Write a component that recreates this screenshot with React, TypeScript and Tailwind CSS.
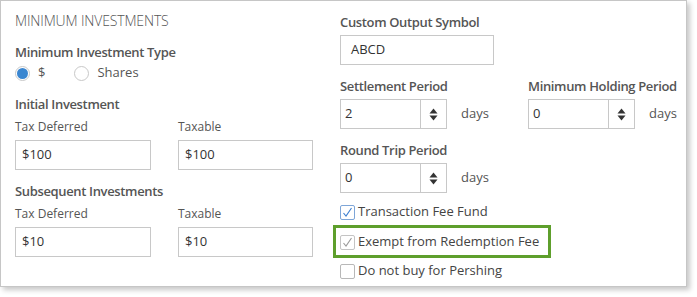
import React from 'react';

const font = { fontFamily: '"Open Sans", "Noto Sans", sans-serif' };

const TextBox = ({ value, className = '' }: { value: string; className?: string }) => (
  <div className={`h-[30px] border border-[#c8c8c8] bg-white flex items-center pl-[6px] text-[13px] text-[#333] ${className}`}>
    {value}
  </div>
);

const Spinner = ({ value }: { value: string }) => (
  <div className="flex items-center">
    <div className="h-[30px] w-[107px] border border-[#c8c8c8] bg-white flex">
      <div className="flex-1 flex items-center pl-[4px] text-[13px] text-[#333]">{value}</div>
      <div className="w-[26px] border-l border-[#c8c8c8] flex items-center justify-center">
        <svg width="9" height="13" viewBox="0 0 9 13">
          <path d="M4.5 0.5 L8.5 5.5 L0.5 5.5 Z" fill="#333" />
          <path d="M0.5 7.5 L8.5 7.5 L4.5 12.5 Z" fill="#333" />
        </svg>
      </div>
    </div>
    <span className="ml-[14px] text-[13px] text-[#555]">days</span>
  </div>
);

const Check = ({ checked, disabled }: { checked?: boolean; disabled?: boolean }) => (
  <span
    className={`w-[15px] h-[15px] rounded-[2px] border flex items-center justify-center bg-white ${
      disabled ? 'border-[#c4c4c4] bg-[#f1f1f1]' : checked ? 'border-[#7ea6d8]' : 'border-[#b8b8b8]'
    }`}
  >
    {checked && (
      <svg width="11" height="11" viewBox="0 0 11 11">
        <path d="M1.5 6 L4 9 L9.5 1" fill="none" stroke={disabled ? '#9a9a9a' : '#3d7fd0'} strokeWidth="1.1" />
      </svg>
    )}
  </span>
);

const Label = ({ children, className = '' }: { children: React.ReactNode; className?: string }) => (
  <div className={`h-[20px] leading-[20px] text-[13px] font-semibold tracking-[-0.35px] text-[#555] ${className}`}>
    {children}
  </div>
);

const SubLabel = ({ children, className = '' }: { children: React.ReactNode; className?: string }) => (
  <div className={`h-[16px] leading-[16px] text-[12px] text-[#555] ${className}`}>{children}</div>
);

export default function App() {
  return (
    <div className="w-[697px] h-[297px] bg-white" style={font}>
      <div className="w-[687px] h-[287px] border border-[#c6c6c6] bg-white shadow-[3px_3px_5px_rgba(0,0,0,0.22)] flex">
        {/* Left column */}
        <div className="w-[324px] pl-[14px] pt-[10px] flex flex-col">
          <div className="h-[20px] leading-[20px] text-[14px] font-light tracking-[-0.15px] text-[#555]">MINIMUM INVESTMENTS</div>
          <Label className="mt-[11px]">Minimum Investment Type</Label>
          <div className="mt-[1px] h-[20px] flex items-center text-[13px] text-[#555]">
            <span className="w-[15px] h-[15px] rounded-full border border-[#c8c8c8] flex items-center justify-center">
              <span className="w-[11px] h-[11px] rounded-full bg-[#3a86d0]" />
            </span>
            <span className="ml-[8px]">$</span>
            <span className="ml-[29px] w-[15px] h-[15px] rounded-full border border-[#c8c8c8]" />
            <span className="ml-[8px]">Shares</span>
          </div>
          <Label className="mt-[11px]">Initial Investment</Label>
          <div className="mt-[5px] grid grid-cols-[136px_135px] gap-x-[27px]">
            <SubLabel>Tax Deferred</SubLabel>
            <SubLabel>Taxable</SubLabel>
            <TextBox value="$100" className="mt-[5px]" />
            <TextBox value="$100" className="mt-[5px]" />
          </div>
          <Label className="mt-[11px]">Subsequent Investments</Label>
          <div className="mt-[5px] grid grid-cols-[136px_135px] gap-x-[27px]">
            <SubLabel>Tax Deferred</SubLabel>
            <SubLabel>Taxable</SubLabel>
            <TextBox value="$10" className="mt-[5px]" />
            <TextBox value="$10" className="mt-[5px]" />
          </div>
        </div>

        {/* Right column */}
        <div className="pl-[15px] pt-[11px] flex flex-col">
          <Label>Custom Output Symbol</Label>
          <TextBox value="ABCD" className="mt-[3px] w-[154px] pl-[10px]" />
          <div className="mt-[11px] grid grid-cols-[188px_auto]">
            <Label>Settlement Period</Label>
            <Label>Minimum Holding Period</Label>
            <div className="mt-[3px]">
              <Spinner value="2" />
            </div>
            <div className="mt-[3px]">
              <Spinner value="0" />
            </div>
          </div>
          <Label className="mt-[11px]">Round Trip Period</Label>
          <div className="mt-[3px]">
            <Spinner value="0" />
          </div>
          <div className="mt-[9px] flex flex-col text-[13px] text-[#444]">
            <div className="h-[20px] flex items-center gap-[3px]">
              <Check checked />
              <span>Transaction Fee Fund</span>
            </div>
            <div className="relative mt-[10px] h-[20px] flex items-center gap-[3px]">
              <span className="absolute -left-[7px] -top-[7px] w-[218px] h-[33px] border-[3px] border-[#5e9f2c]" />
              <Check checked disabled />
              <span>Exempt from Redemption Fee</span>
            </div>
            <div className="mt-[9px] h-[20px] flex items-center gap-[3px]">
              <Check />
              <span>Do not buy for Pershing</span>
            </div>
          </div>
        </div>
      </div>
    </div>
  );
}
